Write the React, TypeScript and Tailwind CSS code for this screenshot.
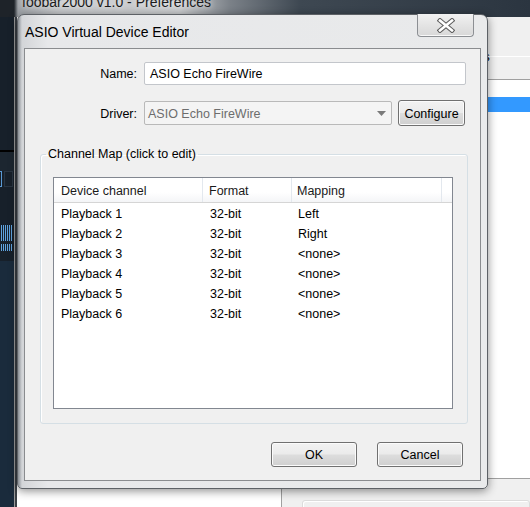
import clsx from "clsx"

const rows = [
  ["Playback 1", "32-bit", "Left"],
  ["Playback 2", "32-bit", "Right"],
  ["Playback 3", "32-bit", "<none>"],
  ["Playback 4", "32-bit", "<none>"],
  ["Playback 5", "32-bit", "<none>"],
  ["Playback 6", "32-bit", "<none>"],
]

const Win7Button = ({ children, className }: { children: React.ReactNode; className?: string }) => (
  <button
    className={clsx(
      "rounded-[3px] border border-[#707070] bg-[linear-gradient(#f2f2f2,#ebebeb_48%,#dddddd_52%,#cfcfcf)] pt-[2px] text-[12.5px] text-black shadow-[inset_0_0_0_1px_#fbfbfb]",
      className
    )}
  >
    {children}
  </button>
)

// the foobar2000 window and its Preferences page behind the dialog
const Backdrop = () => (
  <>
    <div className="absolute left-0 top-0 h-[17px] w-full bg-[linear-gradient(90deg,#1e2329_0px,#1e2329_14px,#9ea2a7_18px,#c4c6c9_60px,#c9cbcd_180px,#7b8188_230px,#3e4852_300px,#2b3540_100%)]">
      <span className="-mt-[5px] block pl-[22px] text-[14px] leading-[15px] text-[#1b1b1b] [text-shadow:0_0_6px_#ffffff]">
        foobar2000 v1.0 - Preferences
      </span>
    </div>

    <div className="absolute left-0 top-[17px] flex h-[490px] w-[14px] flex-col bg-[#17202a]">
      <div className="h-[133px]" />
      <div className="h-[2px] bg-black" />
      <div className="h-[19px] bg-[#1c2630]" />
      <div className="flex h-[16px] gap-[2px]">
        <div className="w-[2px] border border-l-0 border-[#5a9ad6]" />
        <div className="w-[9px] border border-[#2a3542]" />
      </div>
      <div className="h-[38px]" />
      <div className="flex h-[16px] gap-[1px] pl-[1px]">
        {[0, 1, 2, 3, 4, 5].map((i) => (
          <div key={i} className="w-[1px] bg-[#5fa3df]" />
        ))}
      </div>
      <div className="h-[3px]" />
      <div className="flex h-[7px] gap-[1px] pl-[1px]">
        {[0, 1, 2, 3, 4, 5].map((i) => (
          <div key={i} className="w-[1px] bg-[#5fa3df]" />
        ))}
      </div>
      <div className="h-[10px]" />
      <div className="flex-1 bg-[#1a2b3c]" />
    </div>
    <div className="absolute left-[14px] top-[17px] h-[490px] w-[3px] border-l border-[#9a9a9a] bg-[#3a3f45]" />

    <div className="absolute left-[300px] right-0 top-[56px] h-[1px] bg-white" />
    <span className="absolute left-[446px] top-[50px] text-[12.5px] leading-[14px] text-black">Outputs</span>
    <div className="absolute left-[282px] right-[-2px] top-[79px] h-[400px] border border-[#a0a0a0] bg-white">
      <div className="mt-[17px] h-[15px] bg-[#3399ff]" />
    </div>
    <div className="absolute left-[17px] top-[479px] h-[28px] w-[265px] bg-white" />
    <div className="absolute left-[281px] right-0 top-[478px] h-[29px] border-l border-t border-[#a0a0a0] bg-[#f0f0f0] pl-[20px] pt-[21px]">
      <div className="h-[20px] rounded-[3px] border border-[#dcdcdc] shadow-[inset_1px_1px_0_#ffffff]" />
    </div>
  </>
)

const CloseGlyph = () => (
  <svg width="18" height="15" viewBox="0 0 18 15">
    <line x1="3" y1="2.5" x2="15" y2="12.5" stroke="#5c5c5c" strokeWidth="4.6" strokeLinecap="square" />
    <line x1="15" y1="2.5" x2="3" y2="12.5" stroke="#5c5c5c" strokeWidth="4.6" strokeLinecap="square" />
    <line x1="3" y1="2.5" x2="15" y2="12.5" stroke="#ffffff" strokeWidth="2.6" strokeLinecap="square" />
    <line x1="15" y1="2.5" x2="3" y2="12.5" stroke="#ffffff" strokeWidth="2.6" strokeLinecap="square" />
  </svg>
)

export default function App() {
  return (
    <div className="relative h-[507px] w-[530px] overflow-hidden bg-[#f0f0f0] font-['Liberation_Sans',Arial,sans-serif]">
      <Backdrop />

      <div className="absolute left-[17px] top-[14px] flex h-[475px] w-[471px] flex-col rounded-t-[7px] rounded-b-[5px] border border-[#5d6166] bg-[linear-gradient(90deg,#8a8f95_0px,#d3d5d8_4px,#e7e8ea_30px,#e9eaeb_100%)] px-[6px] pb-[7px] shadow-[0_2px_10px_rgba(0,0,0,0.45)]">
        <div className="flex h-[33px] items-center pl-[1px] pt-[2px] text-[14px] text-black">ASIO Virtual Device Editor</div>
        <button className="absolute right-[13px] top-[-1px] flex h-[23px] w-[57px] items-center justify-center rounded-b-[4px] border border-t-0 border-[#8c8f93] bg-[linear-gradient(#f1f1f1,#e4e4e4_50%,#d8d8d8)] shadow-[inset_0_-1px_0_#f8f8f8]">
          <CloseGlyph />
        </button>

        <div className="flex flex-1 flex-col border border-[#8a8c8f] bg-[#f0f0f0] text-[12.5px] text-black">
          <div className="mt-[13px] flex h-[23px] items-center gap-[7px]">
            <span className="w-[112px] pt-[2px] text-right">Name:</span>
            <div className="flex h-[23px] w-[322px] items-center rounded-[2px] border border-[#c3c6cb] bg-white px-[5px] pt-[1px]">
              ASIO Echo FireWire
            </div>
          </div>

          <div className="mt-[15px] flex h-[26px] items-center">
            <span className="w-[112px] pt-[2px] text-right">Driver:</span>
            <div className="ml-[7px] flex h-[24px] w-[248px] items-center justify-between rounded-[2px] border border-[#b9b9b9] bg-[#f4f4f4] pl-[3px] pr-[5px] text-[#6d6d6d]">
              <span className="pt-[2px]">ASIO Echo FireWire</span>
              <svg width="9" height="5" viewBox="0 0 9 5">
                <path d="M0 0h9L4.5 5z" fill="#7a7a7a" />
              </svg>
            </div>
            <Win7Button className="ml-[6px] h-[26px] w-[67px]">Configure</Win7Button>
          </div>

          <fieldset className="ml-[15px] mr-[12px] mt-[21px] h-[277px] rounded-[3px] border border-[#d5dfe5] shadow-[inset_1px_1px_0_#ffffff]">
            <legend className="ml-[5px] px-[2px] leading-[15px]">Channel Map (click to edit)</legend>
            <div className="ml-[12px] mr-[14px] mt-[15px] h-[232px] border border-[#828790] bg-white">
              <div className="flex h-[25px] border-b border-[#d5d5d5] bg-[linear-gradient(#ffffff,#ffffff_60%,#f4f5f7)] text-[#1a1a1a]">
                <div className="flex w-[149px] items-center border-r border-[#e3e8ee] pl-[7px] pt-[3px]">Device channel</div>
                <div className="flex w-[89px] items-center border-r border-[#e3e8ee] pl-[6px] pt-[3px]">Format</div>
                <div className="flex w-[150px] items-center border-r border-[#e3e8ee] pl-[5px] pt-[3px]">Mapping</div>
                <div className="flex-1" />
              </div>
              {rows.map(([channel, format, mapping]) => (
                <div key={channel} className="flex h-[20px] items-center pt-[2px]">
                  <span className="w-[149px] pl-[7px]">{channel}</span>
                  <span className="w-[89px] pl-[7px]">{format}</span>
                  <span className="pl-[6px]">{mapping}</span>
                </div>
              ))}
            </div>
          </fieldset>

          <div className="mr-[17px] mt-[18px] flex justify-end gap-[20px]">
            <Win7Button className="h-[25px] w-[86px]">OK</Win7Button>
            <Win7Button className="h-[25px] w-[86px]">Cancel</Win7Button>
          </div>
        </div>
      </div>
    </div>
  )
}
